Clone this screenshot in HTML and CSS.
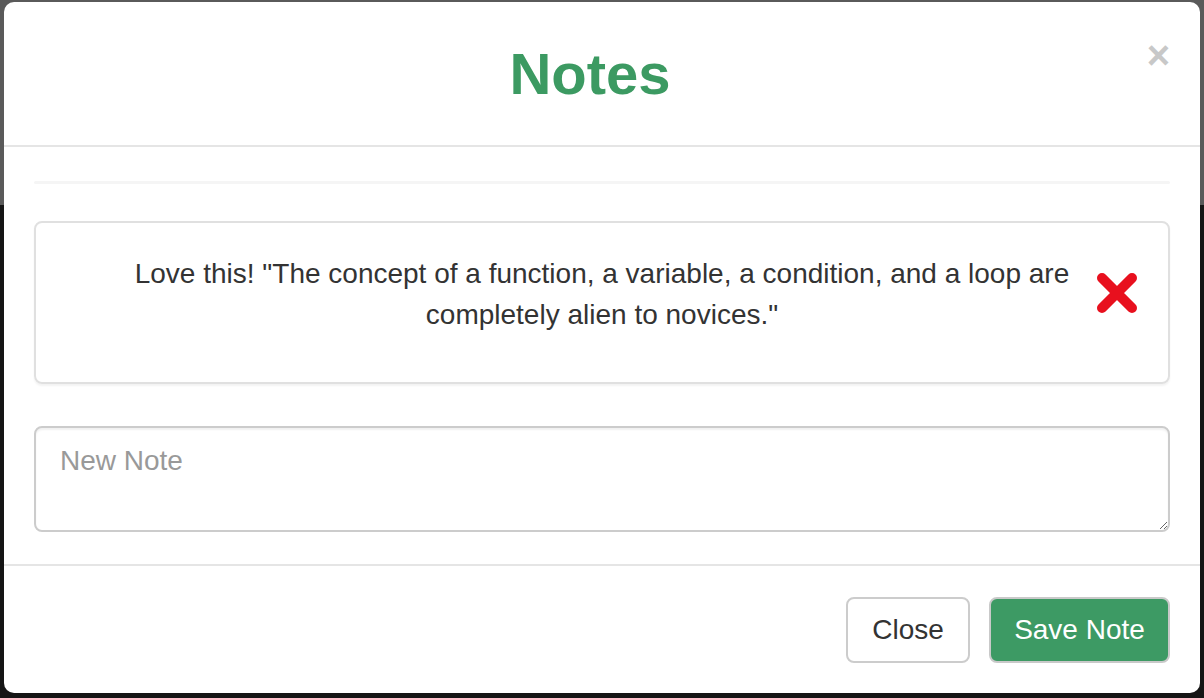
FILE: index.html
```html
<!DOCTYPE html>
<html>
<head>
<meta charset="utf-8">
<link rel="stylesheet" href="styles.css">
</head>
<body>
<div class="modal">
  <div class="modal-header">
    <h1 class="title">Notes</h1>
    <button class="x-close" aria-label="Close">&times;</button>
  </div>
  <div class="modal-body">
    <div class="divider"></div>
    <div class="note-card">
      <p class="note-text">Love this! "The concept of a function, a variable, a condition, and a loop are completely alien to novices."</p>
      <svg class="delete" width="42" height="42" viewBox="0 0 42 42" aria-hidden="true">
        <path d="M6 6 L36 36 M36 6 L6 36" stroke="#e8101e" stroke-width="10" stroke-linecap="round" fill="none"/>
      </svg>
    </div>
    <textarea class="new-note" placeholder="New Note"></textarea>
  </div>
  <div class="modal-footer">
    <button class="btn btn-default">Close</button>
    <button class="btn btn-success">Save Note</button>
  </div>
</div>
</body>
</html>
```

FILE: styles.css
```css
html, body {
  margin: 0;
  height: 100%;
}
body {
  background: linear-gradient(#5a5a5a 0, #5a5a5a 205px, #151515 205px);
  padding: 2px 4px 0 4px;
  box-sizing: border-box;
  font-family: "Liberation Sans", Arial, sans-serif;
  color: #333;
}
.modal {
  width: 1196px;
  height: 691px;
  background: #fff;
  border-radius: 10px;
  display: flex;
  flex-direction: column;
  overflow: hidden;
}
.modal-header {
  position: relative;
  height: 143px;
  border-bottom: 2px solid #e5e5e5;
  display: flex;
  align-items: center;
  justify-content: center;
}
.title {
  margin: 0;
  font-size: 58px;
  font-weight: bold;
  color: #3c9a62;
  line-height: 1;
  padding-right: 24px;
}
.x-close {
  position: absolute;
  right: 30px;
  top: 33px;
  border: 0;
  background: none;
  padding: 0;
  font-family: "Liberation Sans", Arial, sans-serif;
  font-size: 40px;
  font-weight: bold;
  color: #c8c8c8;
  line-height: 40px;
}
.modal-body {
  padding: 0 30px;
  flex: 1;
  display: flex;
  flex-direction: column;
}
.divider {
  margin-top: 34px;
  height: 3px;
  background: #f5f5f5;
  border-radius: 2px;
}
.note-card {
  position: relative;
  margin-top: 37px;
  height: 159px;
  border: 2px solid #e0e0e0;
  border-radius: 8px;
  box-shadow: 0 2px 2px rgba(0,0,0,0.05);
  box-sizing: content-box;
  padding: 0 88px;
}
.note-text {
  margin: 30px 0 0 0;
  font-size: 28px;
  line-height: 41px;
  text-align: center;
  color: #333;
}
.delete {
  position: absolute;
  right: 30px;
  top: 49px;
}
.new-note {
  margin-top: 42px;
  height: 106px;
  box-sizing: border-box;
  border: 2px solid #cccccc;
  border-radius: 8px;
  padding: 14px 24px;
  font-family: "Liberation Sans", Arial, sans-serif;
  font-size: 28px;
  line-height: 37px;
  color: #555;
  resize: vertical;
  box-shadow: inset 0 2px 2px rgba(0,0,0,0.06);
}
.new-note::placeholder {
  color: #999;
}
.modal-footer {
  border-top: 2px solid #e5e5e5;
  padding: 31px 30px 30px;
  display: flex;
  justify-content: flex-end;
  gap: 19px;
}
.btn {
  height: 66px;
  box-sizing: border-box;
  border-radius: 8px;
  font-family: "Liberation Sans", Arial, sans-serif;
  font-size: 28px;
  padding: 0 20px;
  border: 2px solid #cccccc;
}
.btn-default {
  background: #fff;
  color: #333;
  width: 124px;
}
.btn-success {
  background: #3d9a64;
  color: #fff;
  width: 181px;
  border-color: #c9c9c9;
}
```
